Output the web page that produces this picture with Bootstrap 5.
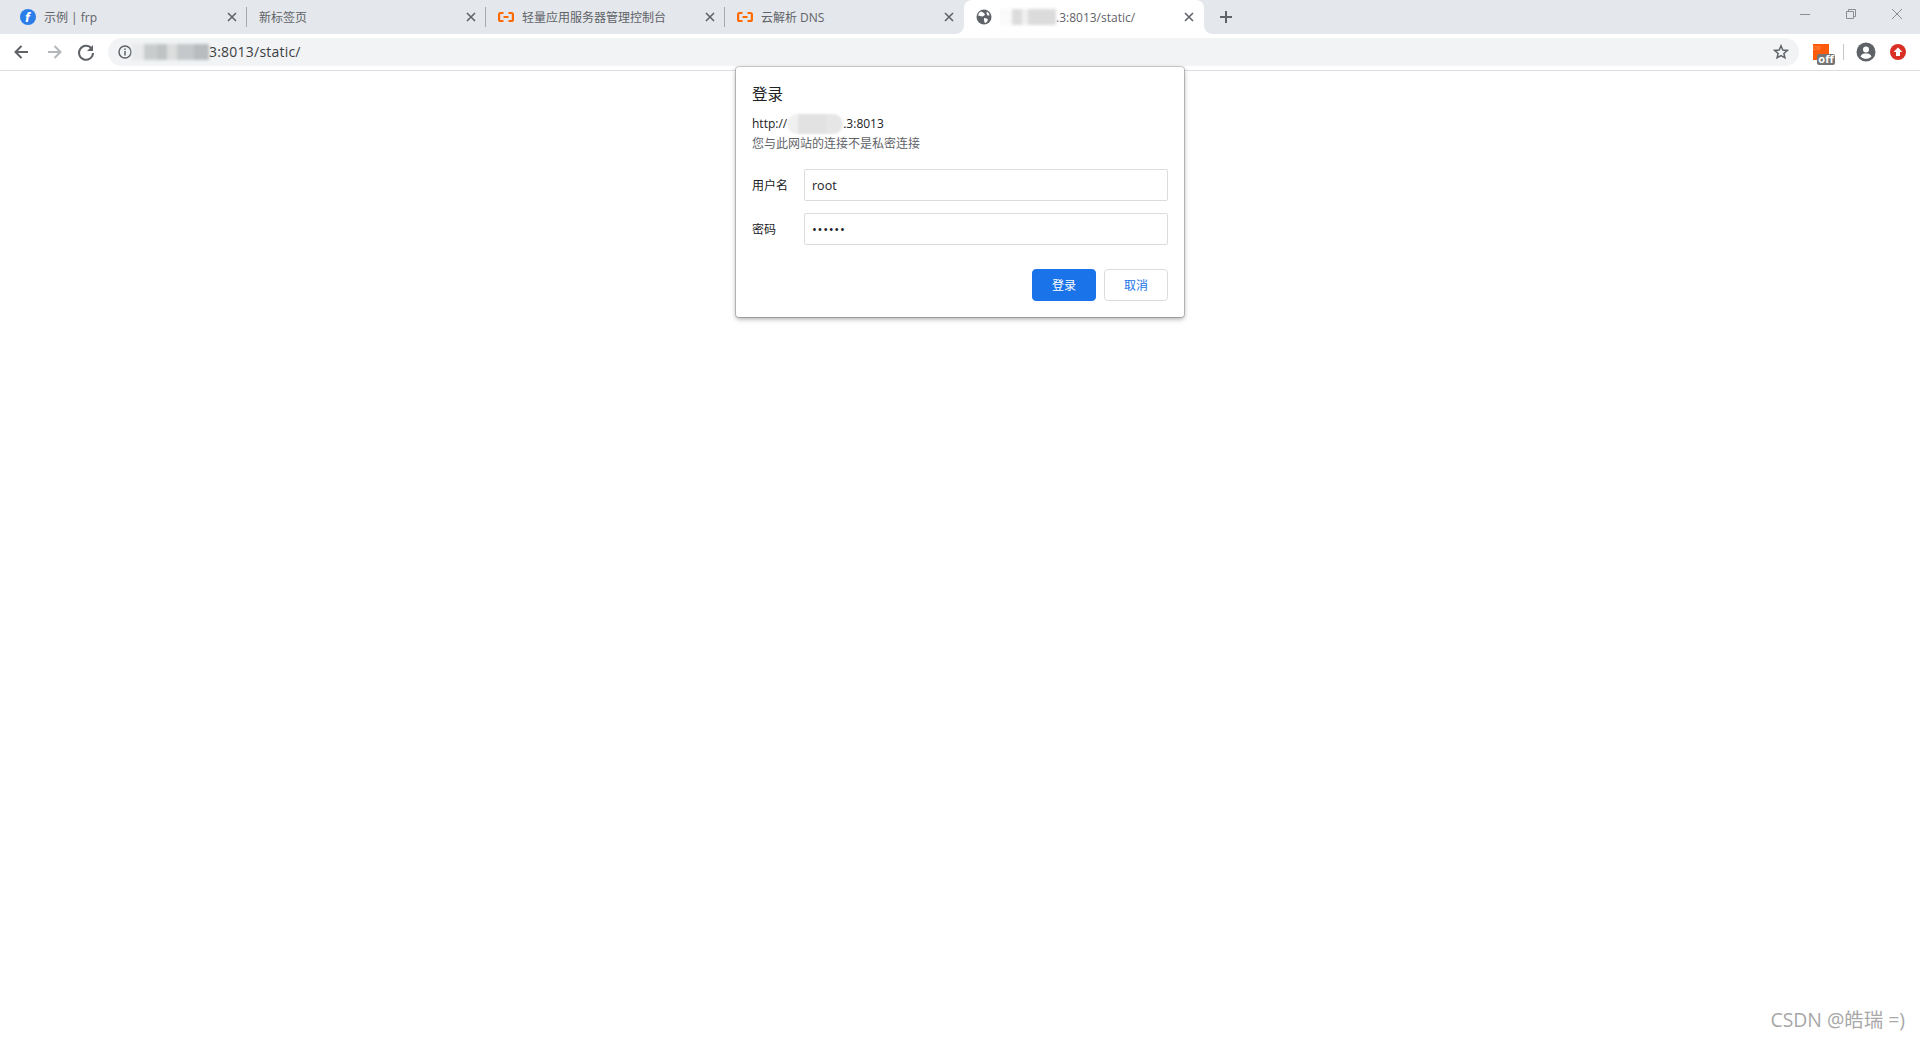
<!DOCTYPE html>
<html lang="zh-CN">
<head>
<meta charset="utf-8">
<title>登录</title>
<link rel="stylesheet" href="https://cdn.jsdelivr.net/npm/bootstrap@5.3.0/dist/css/bootstrap.min.css">
<style>
html,body{height:100%;overflow:hidden}
body{font-family:"Open Sans","Noto Sans CJK SC",sans-serif;background:#fff;color:#202124}
.tabstrip{height:34px;background:#e4e7eb;padding-left:8px}
.tabitem{width:239px;height:34px;padding:0 8px 0 12px;font-size:12px;color:#5f6368;position:relative}
.tabitem.sep::after{content:"";position:absolute;right:0;top:7px;height:20px;width:1px;background:#a6a9ae}
.tabactive{width:240px;background:#fff;border-radius:8px 8px 0 0}
.tabactive::before,.tabactive::after{content:"";position:absolute;bottom:0;width:8px;height:8px}
.tabactive::before{left:-8px;background:radial-gradient(circle at 0 0,transparent 7.500px,#fff 8px)}
.tabactive::after{right:-8px;background:radial-gradient(circle at 100% 0,transparent 7.500px,#fff 8px)}
.tabicon{width:16px;height:16px;margin-right:8px;flex:none}
.tabtitle{flex:1;white-space:nowrap;overflow:hidden;padding-top:2px}
.tabclose{width:14px;height:14px;flex:none}
.newtab{width:16px;height:16px;margin-left:14px}
.winctl{margin-left:auto;gap:36px;padding:0 18px 6px 0}
.toolbar{height:37px;padding-left:6px;border-bottom:1px solid #dadce0;background:#fff}
.navbtn{width:32px;flex:none;height:20px}
.omni{height:28px;width:1691px;margin-left:6px;border-radius:14px;background:#f1f3f4;padding:0 10px;font-size:14px;color:#3c4043;flex:none}
.urltext{letter-spacing:.22px;margin-top:-2px}
.mask{display:inline-block;height:16px;vertical-align:-3px;filter:blur(1.5px);background:linear-gradient(90deg,#e8eaeb 0 16%,#c9cccd 16% 32%,#bfc3c4 32% 46%,#dcdedd 46% 58%,#c5c8ca 58% 80%,#b9bcbe 80%)}
.maskurl{width:77px;flex:none}
.masktab{width:56px;background:linear-gradient(90deg,#fafafa 0 22%,#dcdcdc 22% 40%,#f0f0f0 40% 50%,#dbdbdb 50%)}
.masksite{width:56px;border-radius:10px;height:20px;vertical-align:-6px;background:linear-gradient(90deg,#f0f0f0 0 20%,#e2e2e2 20% 70%,#e6e6e6 70%);filter:blur(1px)}
.extarea{margin-left:14px}
.extbox{position:relative;width:24px;height:24px;flex:none}
.extoff{position:absolute;left:4px;top:14px;width:18px;height:11px;border-radius:2px;background:#757575;color:#fff;font-size:11px;line-height:10px;text-align:center;font-weight:700}
.extsq{position:absolute;left:0;top:4px;width:16px;height:16px;background:#ff5a0a;color:#ff9d6e;font-size:7px;line-height:8px;white-space:nowrap}
.extdiv{width:1px;height:16px;background:#c4c7ca;margin:0 12px 0 6px}
.redup{margin-left:14px}
.authbox{position:absolute;left:736px;top:67px;width:448px;height:250px;background:#fff;border-radius:3px;padding:16px;box-shadow:0 0 0 1px rgba(0,0,0,.18),0 2px 5px rgba(0,0,0,.35);z-index:5}
.authtitle{font-size:15.5px;line-height:22px;color:#202124;margin-bottom:8px;height:22px}
.authsite{font-size:12px;line-height:20px;height:20px;color:#202124;padding-top:1px}
.authnote{font-size:12px;line-height:20px;height:20px;color:#5f6368;padding-top:1px}
.authrow{height:32px}
.authlabel{width:52px;flex:none;font-size:12px;color:#202124;padding-top:2px}
.authbox .form-control{height:32px;min-height:32px;border-radius:2px;border:1px solid #dadce0;font-size:12.500px;padding:0 7px;color:#202124;width:364px;flex:none}
.authbox .form-control[type=password]{letter-spacing:.7px;font-size:13px}
.authform{margin-top:16px;gap:12px}
.authbtns{margin-top:12px;gap:8px;justify-content:flex-end}
.authbtns .btn{width:64px;height:32px;font-size:12px;padding:1px 0 0;border-radius:4px;line-height:30px}
.btnok{background:#1a73e8;border:1px solid #1a73e8;color:#fff}
.btnno{background:#fff;border:1px solid #dadce0;color:#1a73e8}
.wmark{position:absolute;right:15px;bottom:8px;font-size:19.400px;line-height:24px;color:#a8a8a8;z-index:6}
</style>
</head>
<body>
<div class="tabstrip d-flex align-items-center">
  <div class="tabitem sep d-flex align-items-center">
    <svg class="tabicon" viewBox="0 0 16 16"><circle cx="8" cy="8" r="8" fill="#2b7de9"/><text x="7.500" y="12.500" text-anchor="middle" font-family="Roboto,sans-serif" font-style="italic" font-weight="900" font-size="13" fill="#fff">f</text></svg>
    <span class="tabtitle">示例 | frp</span>
    <svg class="tabclose" viewBox="0 0 14 14"><path d="M3 3l8 8M11 3l-8 8" stroke="#5f6368" stroke-width="1.6"/></svg>
  </div>
  <div class="tabitem sep d-flex align-items-center">
    <span class="tabtitle">新标签页</span>
    <svg class="tabclose" viewBox="0 0 14 14"><path d="M3 3l8 8M11 3l-8 8" stroke="#5f6368" stroke-width="1.6"/></svg>
  </div>
  <div class="tabitem sep d-flex align-items-center">
    <svg class="tabicon" viewBox="0 0 16 16"><path d="M5.500 4H2.600Q1.100 4 1.100 5.500V10.500Q1.100 12 2.600 12H5.500M10.500 4H13.400Q14.900 4 14.900 5.500V10.500Q14.900 12 13.400 12H10.500M5.500 8H10.500" fill="none" stroke="#ff6a00" stroke-width="2.200"/></svg>
    <span class="tabtitle">轻量应用服务器管理控制台</span>
    <svg class="tabclose" viewBox="0 0 14 14"><path d="M3 3l8 8M11 3l-8 8" stroke="#5f6368" stroke-width="1.6"/></svg>
  </div>
  <div class="tabitem d-flex align-items-center">
    <svg class="tabicon" viewBox="0 0 16 16"><path d="M5.500 4H2.600Q1.100 4 1.100 5.500V10.500Q1.100 12 2.600 12H5.500M10.500 4H13.400Q14.900 4 14.900 5.500V10.500Q14.900 12 13.400 12H10.500M5.500 8H10.500" fill="none" stroke="#ff6a00" stroke-width="2.200"/></svg>
    <span class="tabtitle">云解析 DNS</span>
    <svg class="tabclose" viewBox="0 0 14 14"><path d="M3 3l8 8M11 3l-8 8" stroke="#5f6368" stroke-width="1.6"/></svg>
  </div>
  <div class="tabitem tabactive d-flex align-items-center">
    <svg class="tabicon" viewBox="0 0 16 16"><circle cx="8" cy="8" r="7.500" fill="#5f6368"/><path d="M5 2.500l3 1.500 1 2-2.500 1.500L4 7l-2-.5L3 4zM8 9l3 .5 1 1.500-2 3-1.500-.5L8 11zM11 2.500l2 2 .5 2-2 0-1-2z" fill="#fff"/></svg>
    <span class="tabtitle"><span class="mask masktab"></span><span>.3:8013/static/</span></span>
    <svg class="tabclose" viewBox="0 0 14 14"><path d="M3 3l8 8M11 3l-8 8" stroke="#5f6368" stroke-width="1.6"/></svg>
  </div>
  <svg class="newtab" viewBox="0 0 16 16"><path d="M8 2v12M2 8h12" stroke="#5f6368" stroke-width="2"/></svg>
  <div class="winctl d-flex align-items-center">
    <svg width="10" height="10" viewBox="0 0 10 10"><path d="M0 5.500h10" stroke="#8a8d91"/></svg>
    <svg width="10" height="10" viewBox="0 0 10 10"><path d="M.5 2.500h7v7h-7zM2.500 2.500V.5h7v7h-2" fill="none" stroke="#8a8d91"/></svg>
    <svg width="10" height="10" viewBox="0 0 10 10"><path d="M0 0l10 10M10 0L0 10" stroke="#8a8d91"/></svg>
  </div>
</div>
<div class="toolbar d-flex align-items-center">
  <svg class="navbtn" viewBox="0 0 32 20"><path d="M22 10H10M15.500 4L9.500 10l6 6" fill="none" stroke="#5f6368" stroke-width="2"/></svg>
  <svg class="navbtn" viewBox="0 0 32 20"><path d="M10 10h12M16.500 4l6 6-6 6" fill="none" stroke="#b4b7ba" stroke-width="2"/></svg>
  <svg class="navbtn" viewBox="0 0 32 20"><path d="M21.500 6.500A7 7 0 1 0 23 11" fill="none" stroke="#5f6368" stroke-width="2"/><path d="M23 3v6h-6z" fill="#5f6368"/></svg>
  <div class="omni d-flex align-items-center">
    <svg width="14" height="14" viewBox="0 0 14 14" class="flex-shrink-0"><circle cx="7" cy="7" r="6" fill="none" stroke="#5f6368" stroke-width="1.500"/><path d="M7 6v4.500M7 3.500v1.500" stroke="#5f6368" stroke-width="1.500"/></svg>
    <span class="mask maskurl"></span><span class="urltext">3:8013/static/</span>
    <svg width="16" height="16" viewBox="0 0 16 16" class="ms-auto flex-shrink-0"><path d="M8 1.800l1.800 4.200 4.500.4-3.400 3 1 4.400L8 11.500l-3.900 2.300 1-4.400-3.400-3 4.500-.4z" fill="none" stroke="#5f6368" stroke-width="1.500"/></svg>
  </div>
  <div class="extarea d-flex align-items-center">
    <div class="extbox"><div class="extsq">co</div><div class="extoff">off</div></div>
    <div class="extdiv"></div>
    <svg width="20" height="20" viewBox="0 0 20 20" class="flex-shrink-0"><circle cx="10" cy="10" r="9.500" fill="#5f6368"/><circle cx="10" cy="7.500" r="3" fill="#fff"/><path d="M4.500 14.500c1-2.500 3-3 5.500-3s4.500.5 5.500 3c-1.500 1.500-3.500 2.300-5.500 2.300s-4-.8-5.500-2.300z" fill="#fff"/></svg>
    <svg width="16" height="16" viewBox="0 0 16 16" class="flex-shrink-0 redup"><circle cx="8" cy="8" r="8" fill="#d93025"/><path d="M8 3.500L12.500 8H10v4H6V8H3.500z" fill="#fff"/></svg>
  </div>
</div>

<div class="authbox">
  <div class="authtitle">登录</div>
  <div class="authsite">http://<span class="mask masksite"></span>.3:8013</div>
  <div class="authnote">您与此网站的连接不是私密连接</div>
  <form class="authform d-flex flex-column">
    <div class="authrow d-flex align-items-center">
      <label class="authlabel">用户名</label>
      <input class="form-control" type="text" value="root">
    </div>
    <div class="authrow d-flex align-items-center">
      <label class="authlabel">密码</label>
      <input class="form-control" type="password" value="123456">
    </div>
    <div class="authbtns d-flex">
      <button type="button" class="btn btnok">登录</button>
      <button type="button" class="btn btnno">取消</button>
    </div>
  </form>
</div>
<div class="wmark">CSDN @皓瑞 =)</div>
<script src="https://cdn.jsdelivr.net/npm/bootstrap@5.3.0/dist/js/bootstrap.bundle.min.js"></script>
</body>
</html>
